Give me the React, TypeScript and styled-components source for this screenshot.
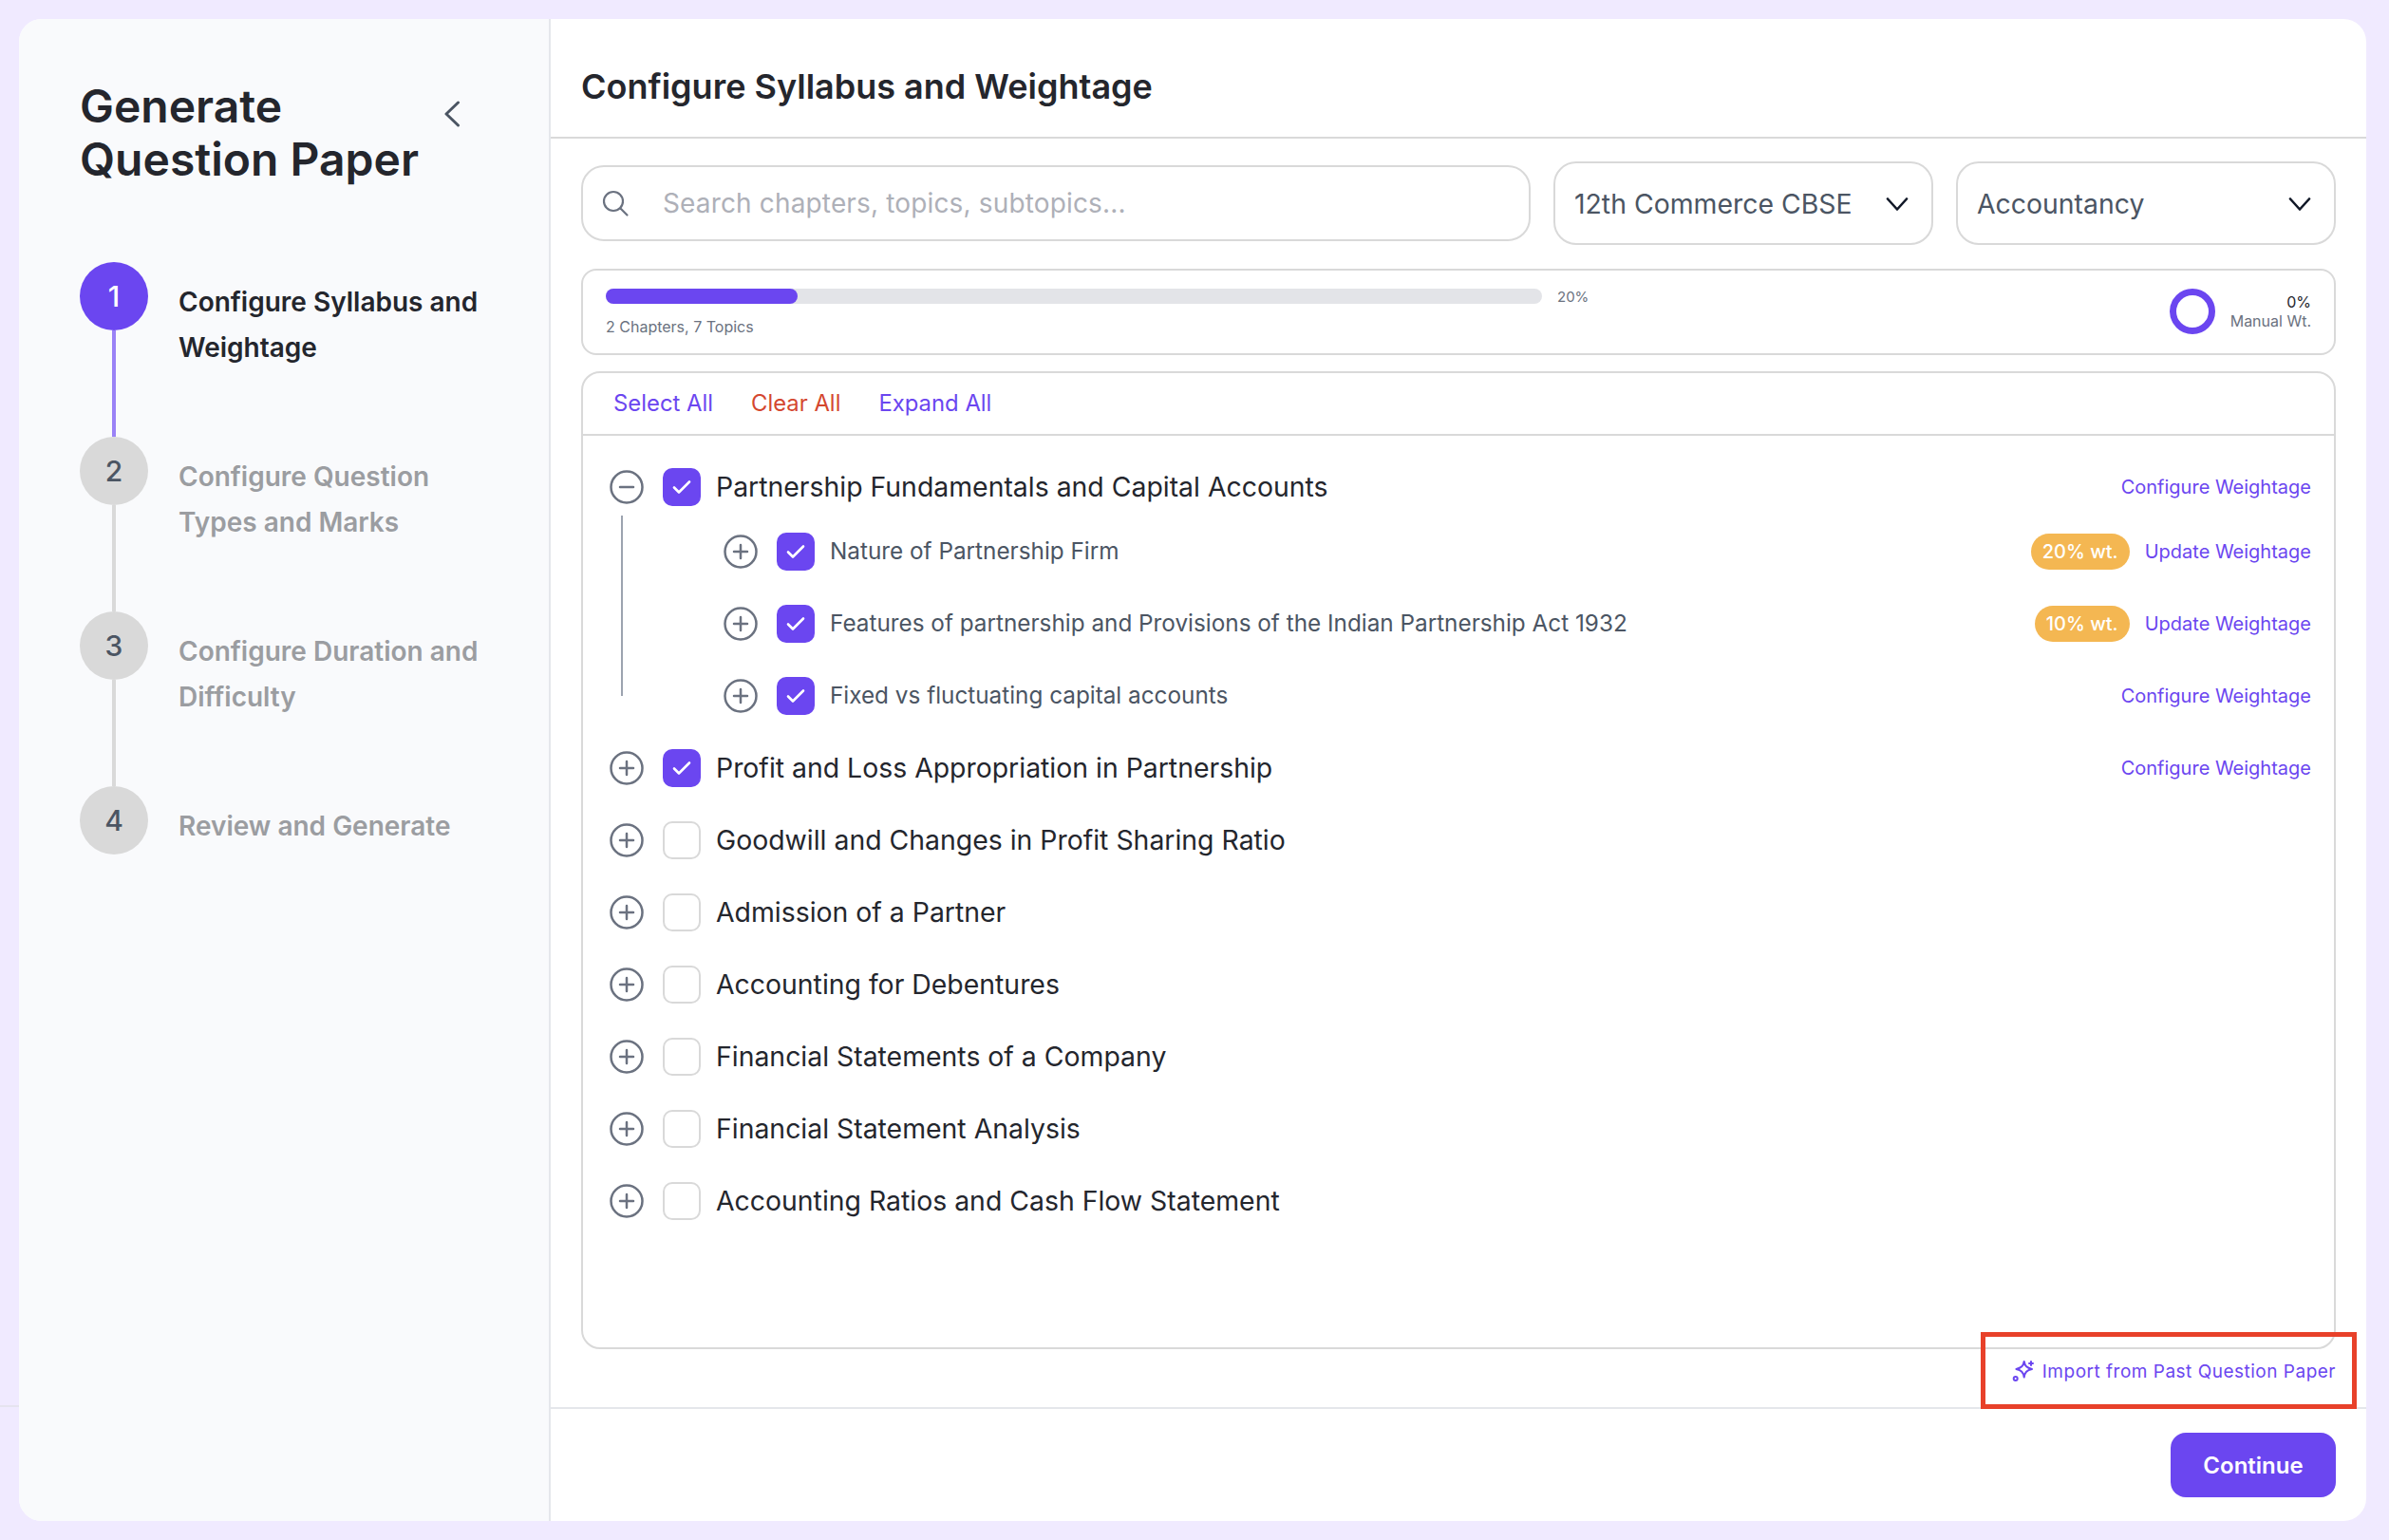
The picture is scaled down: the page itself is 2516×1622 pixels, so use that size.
import { createGlobalStyle } from 'styled-components';
import styled from 'styled-components';

const GlobalStyle = createGlobalStyle`
  html, body {
    margin: 0;
    padding: 0;
    background: #f0eaff;
  }
  * {
    box-sizing: border-box;
  }
  body {
    font-family: Inter, "Liberation Sans", sans-serif;
  }
`;

const PURPLE = '#6b46f0';

const steps = [
  { num: 1, label: ['Configure Syllabus and', 'Weightage'] },
  { num: 2, label: ['Configure Question', 'Types and Marks'] },
  { num: 3, label: ['Configure Duration and', 'Difficulty'] },
  { num: 4, label: ['Review and Generate'] },
];

const otherChapters = [
  'Goodwill and Changes in Profit Sharing Ratio',
  'Admission of a Partner',
  'Accounting for Debentures',
  'Financial Statements of a Company',
  'Financial Statement Analysis',
  'Accounting Ratios and Cash Flow Statement',
];

const ExpandIcon = ({ open }: { open?: boolean }) => (
  <ExpandSvg viewBox="0 0 36 36" fill="none" stroke="#6b7280" strokeWidth="2.5">
    <circle cx="18" cy="18" r="16.5" />
    <path d="M11 18h14" strokeLinecap="round" />
    {!open && <path d="M18 11v14" strokeLinecap="round" />}
  </ExpandSvg>
);

const Check = ({ checked }: { checked?: boolean }) => (
  <CheckBox $checked={checked}>
    {checked && (
      <svg width="22" height="22" viewBox="0 0 22 22" fill="none">
        <path d="M3 11.500l5 5L19 5.500" stroke="#fff" strokeWidth="2.6" strokeLinecap="round" strokeLinejoin="round" />
      </svg>
    )}
  </CheckBox>
);

const Chevron = () => (
  <svg width="24" height="14" viewBox="0 0 24 14" fill="none">
    <path d="M2 1.5l10 11 10-11" stroke="#111827" strokeWidth="2.6" strokeLinecap="round" strokeLinejoin="round" />
  </svg>
);

export default function App() {
  return (
    <Page>
      <GlobalStyle />
      <BackdropLine />
      <Card>
        <Sidebar>
          <SidebarHead>
            <SidebarTitle>
              Generate
              <br />
              Question Paper
            </SidebarTitle>
            <CollapseIcon width="18" height="28" viewBox="0 0 18 28" fill="none">
              <path d="M15.5 2L3 14l12.5 12" stroke="#4b5563" strokeWidth="3" strokeLinecap="round" strokeLinejoin="round" />
            </CollapseIcon>
          </SidebarHead>
          <Steps>
            {steps.map((s, i) => (
              <Step key={s.num} $last={i === steps.length - 1}>
                <Marker>
                  <Bubble $active={i === 0}>{s.num}</Bubble>
                  {i < steps.length - 1 && <Connector $active={i === 0} />}
                </Marker>
                <StepLabel $active={i === 0}>
                  {s.label.map((l) => (
                    <div key={l}>{l}</div>
                  ))}
                </StepLabel>
              </Step>
            ))}
          </Steps>
        </Sidebar>
        <Main>
          <MainHead>
            <MainTitle>Configure Syllabus and Weightage</MainTitle>
          </MainHead>
          <Content>
            <Filters>
              <Search>
                <svg width="30" height="30" viewBox="0 0 30 30" fill="none">
                  <circle cx="13" cy="13" r="10" stroke="#6b7280" strokeWidth="2.2" />
                  <path d="M20.500 20.500l7 7" stroke="#6b7280" strokeWidth="2.2" strokeLinecap="round" />
                </svg>
                <SearchText>Search chapters, topics, subtopics...</SearchText>
              </Search>
              <Select>
                <span>12th Commerce CBSE</span>
                <Chevron />
              </Select>
              <Select>
                <span>Accountancy</span>
                <Chevron />
              </Select>
            </Filters>
            <ProgressPanel>
              <ProgressLeft>
                <BarRow>
                  <Track>
                    <Fill />
                  </Track>
                  <Percent>20%</Percent>
                </BarRow>
                <Small>2 Chapters, 7 Topics</Small>
              </ProgressLeft>
              <ProgressRight>
                <Ring />
                <ManualInfo>
                  <ManualValue>0%</ManualValue>
                  <Small>Manual Wt.</Small>
                </ManualInfo>
              </ProgressRight>
            </ProgressPanel>
            <ListPanel>
              <ListTools>
                <ToolLink>Select All</ToolLink>
                <ToolLink $danger>Clear All</ToolLink>
                <ToolLink>Expand All</ToolLink>
              </ListTools>
              <Rows>
                <Row>
                  <ExpandIcon open />
                  <Check checked />
                  <RowText>Partnership Fundamentals and Capital Accounts</RowText>
                  <RowLink>Configure Weightage</RowLink>
                </Row>
                <Children>
                  <Row>
                    <ExpandIcon />
                    <Check checked />
                    <ChildText>Nature of Partnership Firm</ChildText>
                    <Badge>20% wt.</Badge>
                    <RowLink>Update Weightage</RowLink>
                  </Row>
                  <Row>
                    <ExpandIcon />
                    <Check checked />
                    <ChildText>Features of partnership and Provisions of the Indian Partnership Act 1932</ChildText>
                    <Badge>10% wt.</Badge>
                    <RowLink>Update Weightage</RowLink>
                  </Row>
                  <Row>
                    <ExpandIcon />
                    <Check checked />
                    <ChildText>Fixed vs fluctuating capital accounts</ChildText>
                    <RowLink>Configure Weightage</RowLink>
                  </Row>
                </Children>
                <Row>
                  <ExpandIcon />
                  <Check checked />
                  <RowText>Profit and Loss Appropriation in Partnership</RowText>
                  <RowLink>Configure Weightage</RowLink>
                </Row>
                {otherChapters.map((c) => (
                  <Row key={c}>
                    <ExpandIcon />
                    <Check />
                    <RowText>{c}</RowText>
                  </Row>
                ))}
              </Rows>
            </ListPanel>
            <ImportRow>
              <svg width="24" height="24" viewBox="0 0 24 24" fill="none" stroke={PURPLE} strokeWidth="2" strokeLinecap="round" strokeLinejoin="round">
                <path d="M12.700 2C13.600 6.800 15.500 8.700 21 10C15.500 11.300 13.600 13.200 12.700 18.500C11.800 13.200 9.900 11.300 4.400 10C9.900 8.700 11.800 6.800 12.700 2z" />
                <path d="M20 2v4M18 4h4" />
                <circle cx="3.700" cy="20" r="2" />
              </svg>
              <ImportText>Import from Past Question Paper</ImportText>
            </ImportRow>
          </Content>
          <Footer>
            <ContinueButton>Continue</ContinueButton>
          </Footer>
        </Main>
      </Card>
      <Annotation />
    </Page>
  );
}

const Page = styled.div`
  position: relative;
  width: 2516px;
  height: 1622px;
  padding: 20px 24px 20px 20px;
  background: #f0eaff;
  overflow: hidden;
`;

const BackdropLine = styled.div`
  position: absolute;
  left: 0;
  top: 1480px;
  width: 20px;
  height: 2px;
  background: #e5e3ef;
`;

const Annotation = styled.div`
  position: absolute;
  left: 2086px;
  top: 1403px;
  width: 396px;
  height: 81px;
  border: 5px solid #e8412a;
`;

const Card = styled.div`
  display: flex;
  height: 100%;
  border-radius: 24px;
  overflow: hidden;
  background: #fff;
`;

const Sidebar = styled.aside`
  width: 560px;
  flex: none;
  padding: 64px 0 0 64px;
  background: #f9fafc;
  border-right: 2px solid #e5e7eb;
`;

const SidebarHead = styled.div`
  display: flex;
  align-items: flex-start;
  justify-content: space-between;
  padding-right: 93px;
`;

const CollapseIcon = styled.svg`
  margin-top: 22px;
`;

const SidebarTitle = styled.h1`
  margin: 0;
  font-size: 48px;
  line-height: 56px;
  font-weight: 600;
  color: #24262d;
`;

const Steps = styled.div`
  margin-top: 80px;
`;

const Step = styled.div<{ $last?: boolean }>`
  display: flex;
  gap: 32px;
  height: ${(p) => (p.$last ? '72px' : '184px')};
`;

const Marker = styled.div`
  display: flex;
  flex-direction: column;
  align-items: center;
  width: 72px;
  flex: none;
`;

const Bubble = styled.div<{ $active?: boolean }>`
  display: flex;
  align-items: center;
  justify-content: center;
  width: 72px;
  height: 72px;
  flex: none;
  border-radius: 50%;
  font-size: 30px;
  font-weight: 500;
  background: ${(p) => (p.$active ? PURPLE : '#d9d9d9')};
  color: ${(p) => (p.$active ? '#fff' : '#4b5563')};
`;

const Connector = styled.div<{ $active?: boolean }>`
  flex: 1;
  width: 4px;
  background: ${(p) => (p.$active ? '#9a82f6' : '#d9d9d9')};
`;

const StepLabel = styled.div<{ $active?: boolean }>`
  padding-top: 18px;
  font-size: 28px;
  line-height: 48px;
  font-weight: 600;
  white-space: nowrap;
  color: ${(p) => (p.$active ? '#24262d' : '#9b9da1')};
`;

const Main = styled.main`
  flex: 1;
  display: flex;
  flex-direction: column;
  min-width: 0;
`;

const MainHead = styled.header`
  display: flex;
  align-items: center;
  height: 126px;
  padding: 18px 32px 0;
  border-bottom: 2px solid #d9d9d9;
`;

const MainTitle = styled.h2`
  margin: 0;
  font-size: 36px;
  font-weight: 600;
  color: #24262d;
`;

const Content = styled.div`
  flex: 1;
  display: flex;
  flex-direction: column;
  padding: 24px 32px 0;
`;

const Filters = styled.div`
  display: flex;
  align-items: center;
  gap: 24px;
`;

const Search = styled.div`
  flex: 1;
  display: flex;
  align-items: center;
  gap: 35px;
  height: 80px;
  padding: 0 19px;
  border: 2px solid #d9d9d9;
  border-radius: 24px;
`;

const SearchText = styled.span`
  font-size: 28px;
  letter-spacing: 0.15px;
  color: #aeb0b8;
`;

const Select = styled.div`
  display: flex;
  align-items: center;
  justify-content: space-between;
  width: 400px;
  height: 88px;
  padding: 1px 24px 0 20px;
  border: 2px solid #d9d9d9;
  border-radius: 24px;
  font-size: 28.4px;
  color: #4b5563;
`;

const ProgressPanel = styled.div`
  display: flex;
  justify-content: space-between;
  height: 91px;
  margin-top: 25px;
  padding: 19px 24px 0 24px;
  border: 2px solid #d9d9d9;
  border-radius: 16px;
`;

const ProgressLeft = styled.div`
  display: flex;
  flex-direction: column;
  gap: 14px;
`;

const BarRow = styled.div`
  display: flex;
  align-items: center;
  gap: 16px;
  height: 16px;
`;

const Track = styled.div`
  width: 986px;
  height: 16px;
  border-radius: 8px;
  background: #e3e4e8;
`;

const Fill = styled.div`
  width: 202px;
  height: 100%;
  border-radius: 8px;
  background: ${PURPLE};
`;

const Small = styled.span`
  font-size: 16px;
  line-height: 20px;
  color: #6b7280;
  white-space: nowrap;
`;

const Percent = styled(Small)`
  padding-top: 2px;
  font-size: 15px;
`;

const ProgressRight = styled.div`
  display: flex;
  align-items: flex-start;
  gap: 16px;
`;

const Ring = styled.div`
  width: 48px;
  height: 48px;
  border: 7px solid ${PURPLE};
  border-radius: 50%;
`;

const ManualInfo = styled.div`
  display: flex;
  flex-direction: column;
  align-items: flex-end;
  padding-top: 4px;
`;

const ManualValue = styled.span`
  font-size: 16px;
  line-height: 20px;
  color: #24262d;
`;

const ListPanel = styled.div`
  height: 1030px;
  margin-top: 17px;
  border: 2px solid #d9d9d9;
  border-radius: 20px;
`;

const ListTools = styled.div`
  display: flex;
  align-items: center;
  gap: 40px;
  height: 66px;
  padding: 0 32px 2px;
  border-bottom: 2px solid #d9d9d9;
`;

const ToolLink = styled.span<{ $danger?: boolean }>`
  font-size: 23.85px;
  color: ${(p) => (p.$danger ? '#d4472f' : PURPLE)};
`;

const Rows = styled.div`
  padding: 16px 24px 0 28px;
`;

const Row = styled.div`
  display: flex;
  align-items: center;
  height: 76px;
`;

const Children = styled.div`
  position: relative;
  margin-top: -8px;
  padding-left: 120px;

  &::before {
    content: '';
    position: absolute;
    left: 12px;
    top: 0;
    width: 2px;
    height: 190px;
    background: #9ca3af;
  }
`;

const ExpandSvg = styled.svg`
  width: 36px;
  height: 36px;
  flex: none;
  margin-right: 20px;
`;

const CheckBox = styled.div<{ $checked?: boolean }>`
  display: flex;
  align-items: center;
  justify-content: center;
  width: 40px;
  height: 40px;
  flex: none;
  margin-right: 16px;
  border-radius: 10px;
  background: ${(p) => (p.$checked ? PURPLE : '#fff')};
  border: ${(p) => (p.$checked ? 'none' : '2px solid #d9d9d9')};
`;

const RowText = styled.span`
  flex: 1;
  padding-bottom: 1px;
  font-size: 28.4px;
  color: #24262d;
`;

const ChildText = styled.span`
  flex: 1;
  padding-bottom: 3px;
  font-size: 24.3px;
  color: #4b5563;
`;

const RowLink = styled.span`
  padding-bottom: 1px;
  font-size: 20px;
  color: ${PURPLE};
`;

const Badge = styled.span`
  display: flex;
  align-items: center;
  height: 38px;
  margin-right: 16px;
  padding: 0 12px;
  border-radius: 19px;
  background: #f4b752;
  color: #fff;
  font-size: 20px;
  font-weight: 500;
`;

const ImportRow = styled.div`
  flex: 1;
  display: flex;
  align-items: center;
  justify-content: flex-end;
  gap: 8px;
  padding-bottom: 15px;
`;

const ImportText = styled.span`
  font-size: 19px;
  letter-spacing: 0.5px;
  color: ${PURPLE};
`;

const Footer = styled.footer`
  display: flex;
  justify-content: flex-end;
  align-items: center;
  height: 120px;
  padding: 0 32px;
  border-top: 2px solid #e5e7eb;
`;

const ContinueButton = styled.button`
  width: 174px;
  height: 68px;
  border: none;
  border-radius: 16px;
  background: ${PURPLE};
  color: #fff;
  font-family: inherit;
  font-size: 24px;
  font-weight: 600;
`;
